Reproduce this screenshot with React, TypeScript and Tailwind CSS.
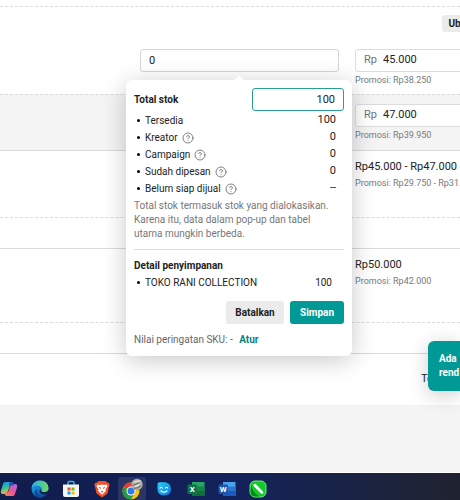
import React, { useState } from "react";
import { CircleHelp } from "lucide-react";

const stockRows = [
  { label: "Tersedia", value: "100", help: false },
  { label: "Kreator", value: "0", help: true },
  { label: "Campaign", value: "0", help: true },
  { label: "Sudah dipesan", value: "0", help: true },
  { label: "Belum siap dijual", value: "--", help: true },
];

const PriceInput = ({ id, value, promo }: { id: string; value: string; promo: string }) => {
  const [price, setPrice] = useState(value);
  return (
    <div className="w-[200px] shrink-0">
      <div className="flex h-[23px] items-center gap-[6px] rounded-[3px] border border-[#dcdcdc] bg-white px-2">
        <label htmlFor={id} className="text-[11px] text-[#6f7377]">Rp</label>
        <input
          id={id}
          value={price}
          onChange={(e) => setPrice(e.target.value)}
          className="w-full bg-transparent text-[11px] outline-none"
        />
      </div>
      <p className="mt-[1px] text-[9px] leading-[14px] text-[#77797c]">Promosi: {promo}</p>
    </div>
  );
};

const PriceText = ({ value, promo }: { value: string; promo: string }) => (
  <div className="w-[200px] shrink-0">
    <p className="text-[11px] leading-4">{value}</p>
    <p className="text-[9px] leading-4 text-[#77797c]">Promosi: {promo}</p>
  </div>
);

const StockPopover = () => {
  const [total, setTotal] = useState("100");
  return (
    <div
      role="dialog"
      className="absolute -left-[14px] top-[31px] z-20 w-[226px] rounded-[6px] bg-white p-2 text-[10px] shadow-[0_4px_24px_rgba(0,0,0,0.22)]"
    >
      <div className="absolute -top-[3px] left-1/2 size-2 -translate-x-1/2 rotate-45 bg-white" />
      <div className="flex items-center justify-between">
        <label htmlFor="total" className="font-bold">Total stok</label>
        <input
          id="total"
          value={total}
          onChange={(e) => setTotal(e.target.value)}
          className="h-[23px] w-[92px] rounded-[3px] border border-[#2a9c98] px-2 text-right text-[11px] outline-none"
        />
      </div>
      <ul className="mt-[1px] pr-2">
        {stockRows.map((row) => (
          <li key={row.label} className="flex h-[17px] items-center">
            <span className="mx-[3px] size-[3px] rounded-full bg-black" />
            <span className="ml-[2px]">{row.label}</span>
            {row.help && <CircleHelp className="ml-1 size-3 text-[#6f6f6f]" strokeWidth={1.75} />}
            <span className="ml-auto text-[11px]">{row.value}</span>
          </li>
        ))}
      </ul>
      <p className="mt-[2px] pr-3 leading-[14px] text-[#777]">
        Total stok termasuk stok yang dialokasikan. Karena itu, data dalam pop-up dan tabel utama mungkin berbeda.
      </p>
      <hr className="my-2 border-[#dcdcdc]" />
      <h3 className="text-[10px] font-bold leading-4">Detail penyimpanan</h3>
      <div className="flex h-[17px] items-center pr-3">
        <span className="mx-[3px] size-[3px] rounded-full bg-black" />
        <span className="ml-[2px]">TOKO RANI COLLECTION</span>
        <span className="ml-auto">100</span>
      </div>
      <div className="mt-[10px] flex justify-end gap-[6px]">
        <button className="h-[23px] w-[58px] rounded-[3px] bg-[#ebebeb] font-bold">Batalkan</button>
        <button className="h-[23px] w-[54px] rounded-[3px] bg-[#009995] font-bold text-white">Simpan</button>
      </div>
      <p className="mt-2 leading-4 text-[#666]">
        Nilai peringatan SKU: -{" "}
        <a href="#" className="ml-1 font-bold text-[#00847f]">Atur</a>
      </p>
    </div>
  );
};

const CopilotIcon = () => (
  <svg viewBox="0 0 18 18" className="size-[18px]">
    <defs>
      <linearGradient id="cpA" x1="0" y1="0" x2="0.3" y2="1">
        <stop offset="0" stopColor="#2388ee" />
        <stop offset="0.5" stopColor="#2bbf9c" />
        <stop offset="1" stopColor="#f2c32e" />
      </linearGradient>
      <linearGradient id="cpB" x1="1" y1="0" x2="0" y2="1">
        <stop offset="0" stopColor="#a56bea" />
        <stop offset="0.5" stopColor="#e8569a" />
        <stop offset="1" stopColor="#f68a4a" />
      </linearGradient>
    </defs>
    <path d="M5 2h6q2 0 2.500 2l.5 1.500h-2.500q-1.500 0-2 1.500L7.500 12q-.7 2-2.700 2H3Q0 14 1 10.500L3 4q.5-2 2-2z" fill="url(#cpA)" />
    <path d="M13 16H7q-2 0-2.500-2L4 12.500h2.500q1.500 0 2-1.500l2-5q.7-2 2.700-2H15q3 0 2 3.500L15 14q-.5 2-2 2z" fill="url(#cpB)" />
    <path d="M11 2q2 0 2.500 2l.5 1.500h-2.500q-1.300 0-2 1.500L9 3.500Q9 2 11 2z" fill="#234fc4" />
  </svg>
);

const EdgeIcon = () => (
  <svg viewBox="0 0 18 18" className="size-[18px]">
    <defs>
      <linearGradient id="edA" x1="0" y1="0.3" x2="1" y2="0.4">
        <stop offset="0" stopColor="#2aa9e8" />
        <stop offset="1" stopColor="#68dc67" />
      </linearGradient>
      <linearGradient id="edB" x1="0" y1="0" x2="1" y2="1">
        <stop offset="0" stopColor="#1aa0e6" />
        <stop offset="1" stopColor="#1257b0" />
      </linearGradient>
    </defs>
    <circle cx="9" cy="9" r="8.500" fill="url(#edB)" />
    <path d="M.6 8Q1.500.5 9 .5q8 .3 8.500 7.500-.2 4-4.500 4-3 0-2.500-2 .8-1.500-.3-2.700Q8.500 5.500 5.500 5.600 2 6 .6 8z" fill="url(#edA)" />
    <path d="M6 9q-.5 4.500 4 6 3.500.8 6-1.500-3 4.500-8 4Q3 16.500 3.500 12 4 10 6 9z" fill="#0e4a9c" />
    <path d="M10.300 9.200q-.8 2.800 2.700 3.100 2.500 0 4-1.300l.4 1.200q-1 2-3 2.600Q10 15 8.500 12.500 7.800 10 10.300 9.200z" fill="#14204e" />
  </svg>
);

const StoreIcon = () => (
  <svg viewBox="0 0 18 18" className="size-[18px]">
    <path d="M6 5V2.500q0-1 1-1h4q1 0 1 1V5" fill="none" stroke="#35b4ee" strokeWidth="1.400" />
    <path d="M1 4.500h16V15q0 2-2 2H3q-2 0-2-2z" fill="#f4f5f7" />
    <path d="M5.500 7.500h3v3h-3z" fill="#f25022" />
    <path d="M9.500 7.500h3v3h-3z" fill="#7fba00" />
    <path d="M5.500 11.500h3v3h-3z" fill="#00a4ef" />
    <path d="M9.500 11.500h3v3h-3z" fill="#ffb900" />
  </svg>
);

const BraveIcon = () => (
  <svg viewBox="0 0 18 18" className="size-[18px]">
    <path d="M5.500 1h7l1.500 1.500 1.700.2 1 2.300-.7 1.500-1.500 7L9 17.500 3.500 13.500 2 6.500 1.300 5l1-2.300 1.700-.2z" fill="#f4502a" />
    <path d="M4.500 4.500l2.500.4 2-.4 2 .4 2.500-.4 1 1.800-2 3 .4 1.700L9 14.800 5.100 11l.4-1.700-2-3z" fill="#fff" />
    <path d="M5.500 6.800l2.400.7-.4 2zM12.500 6.800l-2.400.7.4 2zM7.500 11.500L9 10.700l1.500.8L9 12.700z" fill="#f4502a" />
  </svg>
);

const ChromeIcon = () => (
  <svg viewBox="0 0 24 24" className="size-6">
    <circle cx="11" cy="14" r="8.500" fill="#fbc116" />
    <path d="M11 14L3.600 9.800A8.500 8.500 0 0 1 18.400 9.800z" fill="#e33b2e" />
    <path d="M11 14L3.600 9.800A8.500 8.500 0 0 0 11 22.500L14.600 16z" fill="#229b48" />
    <circle cx="11" cy="14" r="4.500" fill="#fff" />
    <circle cx="11" cy="14" r="3.500" fill="#2c7be5" />
    <circle cx="17" cy="7.500" r="5.700" fill="#aaa9a6" />
    <path d="M11.800 6q5-4.500 10-2-3 1.500-10 2z" fill="#d6d5d1" />
    <path d="M13 9.500l9-3.500-5 3.800z" fill="#f4f3ef" />
    <path d="M12.500 8.500l7-2.500M14 11.500q4-.5 7-2.500" stroke="#686764" strokeWidth="1" fill="none" />
  </svg>
);

const SmileIcon = () => (
  <svg viewBox="0 0 16 16" className="size-4">
    <defs>
      <linearGradient id="sm" x1="0" y1="0" x2="1" y2="1">
        <stop offset="0" stopColor="#25d4ef" />
        <stop offset="1" stopColor="#0874e8" />
      </linearGradient>
    </defs>
    <path d="M1.500 3q0-1.800 2-1.800H9q6 1 6 6.800 0 6.500-7 6.500-6.500-.5-6.500-6.500z" fill="url(#sm)" />
    <path d="M4 7q1-1.500 2.200 0M9.500 7q1-1.500 2.200 0M5 10q3 2.500 6 0" stroke="#fff" strokeWidth="1.200" strokeLinecap="round" fill="none" />
  </svg>
);

// Excel and Word share the same sheet and tile
const OfficeIcon = ({ letter, tones }: { letter: string; tones: string[] }) => (
  <svg viewBox="0 0 18 16" className="h-4 w-[18px]">
    <path d="M5 1h12.500v14H5z" fill={tones[0]} />
    <path d="M5 5.500h12.500V10H5z" fill={tones[1]} />
    <path d="M5 10h12.500v5H5z" fill={tones[2]} />
    <rect x="0.500" y="3.500" width="9.500" height="9.500" rx="1" fill={tones[3]} />
    <text x="5.300" y="11.200" textAnchor="middle" fontSize="8" fontWeight="700" fontFamily="Roboto, sans-serif" fill="#fff">{letter}</text>
  </svg>
);

const PenIcon = () => (
  <svg viewBox="0 0 18 18" className="size-[18px]">
    <rect x="1" y="1" width="16" height="16" rx="5" fill="#12c92b" stroke="#75e884" strokeWidth="1" />
    <path d="M2 5q2 9 9 11.500H6Q1.500 16 1.500 12z" fill="#078a1b" />
    <path d="M4.500 4.500l2-.7 7 7.200q1 1.500.8 2.700-1.500.3-2.800-.8l-7-7z" fill="#fff" />
  </svg>
);

const App = () => {
  const [stock, setStock] = useState("0");
  return (
    <div className="relative flex min-h-screen flex-col overflow-hidden bg-[#f4f4f4] font-[Roboto,sans-serif] text-[#222]">
      <main className="bg-white">
        <div className="h-[6px]" />
        <section className="border-t border-dashed border-[#dadada] pt-2">
          <div className="flex justify-end">
            <button className="-mr-[18px] h-[17px] w-9 rounded-[3px] bg-[#ebebeb] text-[10px] font-bold">Ubah</button>
          </div>
          <div className="mt-[17px] grid h-[45px] grid-cols-[minmax(0,1fr)_105px] pl-[140px]">
            <div className="relative mr-4">
              <input
                aria-label="Stok"
                value={stock}
                onChange={(e) => setStock(e.target.value)}
                className="block h-[23px] w-full rounded-[3px] border border-[#d5d5d5] px-2 text-[11px] outline-none"
              />
              <StockPopover />
            </div>
            <PriceInput id="price-1" value="45.000" promo="Rp38.250" />
          </div>
        </section>
        <section className="grid h-[57px] grid-cols-[minmax(0,1fr)_105px] border-y border-[#dadada] bg-[#f4f4f4] pt-[9px] [border-top-style:dashed]">
          <div />
          <PriceInput id="price-2" value="47.000" promo="Rp39.950" />
        </section>
        <section className="grid h-[66px] grid-cols-[minmax(0,1fr)_105px] pt-2">
          <div />
          <PriceText value="Rp45.000 - Rp47.000" promo="Rp29.750 - Rp31.450" />
        </section>
        <div className="h-8 border-y border-[#dadada] [border-top-style:dashed]" />
        <section className="grid h-[73px] grid-cols-[minmax(0,1fr)_105px] pt-2">
          <div />
          <PriceText value="Rp50.000" promo="Rp42.000" />
        </section>
        <div className="h-8 border-y border-[#dadada] [border-top-style:dashed]" />
        <footer className="flex h-[51px] items-center justify-end">
          <span className="w-[39px] text-[11px]">Total</span>
        </footer>
      </main>

      <div
        role="status"
        className="absolute right-0 top-[341px] z-10 w-8 overflow-hidden whitespace-nowrap rounded-l-[6px] bg-[#009995] py-[11px] pl-[11px] text-[10px] font-bold leading-[14px] text-white shadow-[0_4px_20px_rgba(0,0,0,0.2)]"
      >
        Ada
        <br />
        rend
      </div>

      <nav className="mt-auto flex h-7 items-center overflow-hidden border-t border-white bg-linear-to-r from-[#101c4b] via-[#13225c] via-50% to-[#20222f] pt-[5px]">
        <div className="flex w-[24px] justify-start"><CopilotIcon /></div>
        <div className="flex w-[31px] justify-center"><EdgeIcon /></div>
        <div className="flex w-[31px] justify-center"><StoreIcon /></div>
        <div className="flex w-[31px] justify-center"><BraveIcon /></div>
        <div className="mx-[1px] flex w-[28px] justify-center rounded-[3px] bg-white/10"><ChromeIcon /></div>
        <div className="flex w-[33px] justify-center"><SmileIcon /></div>
        <div className="flex w-[31px] justify-center">
          <OfficeIcon letter="X" tones={["#27a567", "#17854b", "#126b3d", "#127241"]} />
        </div>
        <div className="flex w-[31px] justify-center">
          <OfficeIcon letter="W" tones={["#4ba3ed", "#2878d4", "#1c5abd", "#1c54b2"]} />
        </div>
        <div className="flex w-[31px] justify-center"><PenIcon /></div>
      </nav>
    </div>
  );
};

export default App;
